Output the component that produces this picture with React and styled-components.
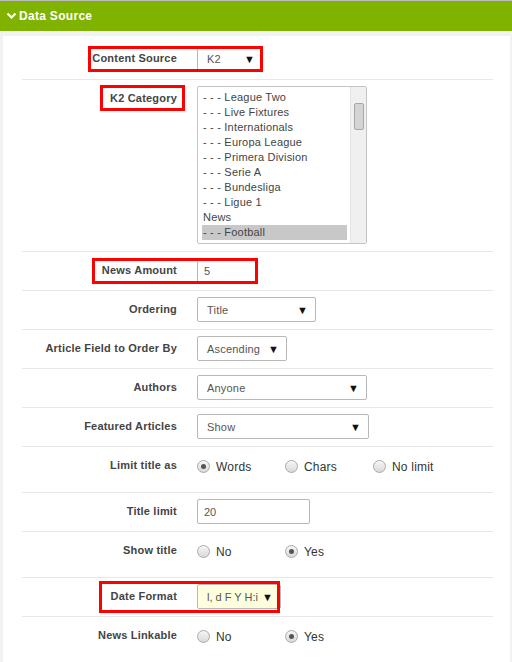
import React from 'react'
import styled, { createGlobalStyle } from 'styled-components'

const font = `Arial, 'Liberation Sans', sans-serif`

const GlobalStyle = createGlobalStyle`
  html, body {
    margin: 0;
    padding: 0;
    background: #f2f2f2;
    font-family: ${font};
  }
`

const Page = styled.div`
  width: 512px;
  height: 662px;
  overflow: hidden;
  background: #f2f2f2;
`

const Header = styled.div`
  height: 30px;
  border-top: 1px solid #bcbcbc;
  background: #7fb300;
  display: flex;
  align-items: center;
  padding-left: 6px;
  gap: 2px;
  color: #fff;
  font: bold 12px ${font};
  letter-spacing: 0.3px;
`

const Card = styled.div`
  margin: 5px 2px 0 3px;
  height: 640px;
  background: #fff;
`

const Rows = styled.div`
  margin-left: 19px;
  width: 471px;
`

const Row = styled.div`
  position: relative;
  display: flex;
  align-items: flex-start;
  padding: ${(p) => (p.$tall ? '6px 0 14px' : '6px 0 7px')};
  border-top: 1px solid #e8e8e8;

  &:first-child {
    border-top: none;
    padding: 10px 0 8px;
  }
`

const Label = styled.div`
  width: 155px;
  margin-right: 20px;
  flex-shrink: 0;
  text-align: right;
  font: bold 11px/25px ${font};
  letter-spacing: 0.2px;
  color: #444;
`

const Select = styled.div`
  box-sizing: border-box;
  width: ${(p) => p.$w}px;
  height: 25px;
  display: flex;
  align-items: center;
  justify-content: space-between;
  gap: 4px;
  padding: 0 ${(p) => p.$pr || 7}px 0 9px;
  border: 1px solid #b8b8b8;
  border-radius: 2px;
  background: ${(p) => p.$bg || '#fff'};
  font-size: 11px;
  letter-spacing: ${(p) => (p.$tight ? 0 : 0.2)}px;
  white-space: nowrap;
  color: #555;
`

const Arrow = styled.span`
  font-size: 11px;
  color: #111;
`

const Input = styled.div`
  box-sizing: border-box;
  width: ${(p) => p.$w}px;
  height: 25px;
  display: flex;
  align-items: center;
  padding-left: 6px;
  border: 1px solid #b8b8b8;
  border-radius: 2px;
  font-size: 11px;
  color: #555;
`

const ListBox = styled.div`
  box-sizing: border-box;
  width: 170px;
  height: 158px;
  display: flex;
  border: 1px solid #c4c4c4;
  border-radius: 2px;
  background: #fff;
`

const ListItems = styled.div`
  flex: 1;
  padding: 3px 3px 0 4px;
`

const ListItem = styled.div`
  height: 15px;
  line-height: 15px;
  padding-left: 1px;
  font-size: 11px;
  letter-spacing: 0.2px;
  color: #444;
  background: ${(p) => (p.$selected ? '#c8c8c8' : 'transparent')};
`

const ScrollTrack = styled.div`
  width: 15px;
  background: #f0f0f0;
  border-left: 1px solid #e4e4e4;
  padding-top: 16px;
  display: flex;
  justify-content: center;
`

const ScrollThumb = styled.div`
  width: 8px;
  height: 25px;
  background: #d4d4d4;
  border: 1px solid #a8a8a8;
  border-radius: 2px;
`

const RadioGroup = styled.div`
  display: flex;
  align-items: center;
  height: 25px;
`

const RadioOption = styled.label`
  width: 88px;
  display: flex;
  align-items: center;
  gap: 6px;
  font-size: 12px;
  letter-spacing: 0.2px;
  color: #333;
  padding-top: 2px;
`

const RadioDot = styled.span`
  box-sizing: border-box;
  width: 13px;
  height: 13px;
  border-radius: 50%;
  border: 1px solid #a9a9a9;
  background: linear-gradient(#f6f6f6, #d9d9d9);
  display: flex;
  align-items: center;
  justify-content: center;

  &::after {
    content: '';
    width: 5px;
    height: 5px;
    border-radius: 50%;
    background: ${(p) => (p.$checked ? '#555' : 'transparent')};
  }
`

const Highlight = styled.div`
  position: absolute;
  box-sizing: border-box;
  border: 3px solid #f00;
  pointer-events: none;
`

const Chevron = () => (
  <svg width="11" height="8" viewBox="0 0 11 8">
    <polyline
      points="1.5,1.5 5.5,5.5 9.5,1.5"
      fill="none"
      stroke="#fff"
      strokeWidth="2.2"
    />
  </svg>
)

const Radio = ({ options, checked }) => (
  <RadioGroup>
    {options.map((o) => (
      <RadioOption key={o}>
        <RadioDot $checked={o === checked} />
        {o}
      </RadioOption>
    ))}
  </RadioGroup>
)

const SelectBox = ({ value, w, bg, pr, tight }) => (
  <Select $w={w} $bg={bg} $pr={pr} $tight={tight}>
    {value}
    <Arrow>▼</Arrow>
  </Select>
)

const categories = [
  '- - - League Two',
  '- - - Live Fixtures',
  '- - - Internationals',
  '- - - Europa League',
  '- - - Primera Division',
  '- - - Serie A',
  '- - - Bundesliga',
  '- - - Ligue 1',
  'News',
  '- - - Football',
]

const App = () => (
  <Page>
    <GlobalStyle />
    <Header>
      <Chevron />
      Data Source
    </Header>
    <Card>
      <Rows>
        <Row>
          <Label>Content Source</Label>
          <SelectBox value="K2" w={66} />
          <Highlight style={{ left: 66, top: 10, width: 175, height: 26 }} />
        </Row>
        <Row>
          <Label>K2 Category</Label>
          <ListBox>
            <ListItems>
              {categories.map((c, i) => (
                <ListItem key={c} $selected={i === categories.length - 1}>
                  {c}
                </ListItem>
              ))}
            </ListItems>
            <ScrollTrack>
              <ScrollThumb />
            </ScrollTrack>
          </ListBox>
          <Highlight style={{ left: 78, top: 5, width: 85, height: 26 }} />
        </Row>
        <Row>
          <Label>News Amount</Label>
          <Input $w={61}>5</Input>
          <Highlight style={{ left: 70, top: 6, width: 166, height: 26 }} />
        </Row>
        <Row>
          <Label>Ordering</Label>
          <SelectBox value="Title" w={119} />
        </Row>
        <Row>
          <Label>Article Field to Order By</Label>
          <SelectBox value="Ascending" w={90} />
        </Row>
        <Row>
          <Label>Authors</Label>
          <SelectBox value="Anyone" w={170} />
        </Row>
        <Row>
          <Label>Featured Articles</Label>
          <SelectBox value="Show" w={172} />
        </Row>
        <Row $tall>
          <Label>Limit title as</Label>
          <Radio options={['Words', 'Chars', 'No limit']} checked="Words" />
        </Row>
        <Row>
          <Label>Title limit</Label>
          <Input $w={113}>20</Input>
        </Row>
        <Row $tall>
          <Label>Show title</Label>
          <Radio options={['No', 'Yes']} checked="Yes" />
        </Row>
        <Row>
          <Label>Date Format</Label>
          <SelectBox value="l, d F Y H:i" w={84} bg="#ffffdd" pr={10} tight />
          <Highlight style={{ left: 77, top: 3, width: 181, height: 32 }} />
        </Row>
        <Row $tall>
          <Label>News Linkable</Label>
          <Radio options={['No', 'Yes']} checked="Yes" />
        </Row>
      </Rows>
    </Card>
  </Page>
)

export default App
